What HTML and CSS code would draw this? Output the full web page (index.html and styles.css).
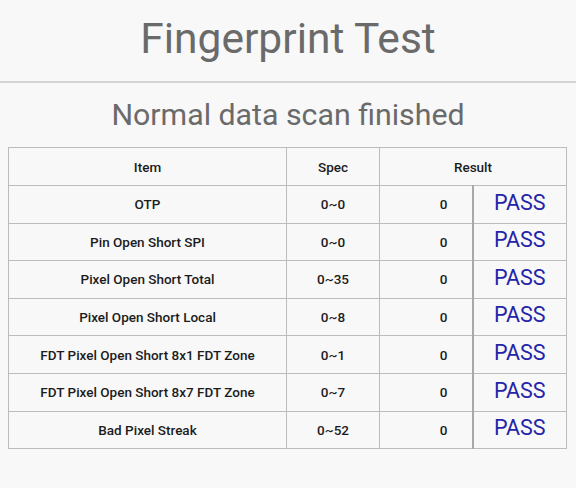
FILE: index.html
```html
<!DOCTYPE html>
<html>
<head>
<meta charset="utf-8">
<link rel="stylesheet" href="styles.css">
</head>
<body>
<header class="title-bar"><h1 class="title">Fingerprint Test</h1></header>
<h2 class="status">Normal data scan finished</h2>
<table class="results">
  <colgroup>
    <col class="c-item"><col class="c-spec"><col class="c-val"><col class="c-res">
  </colgroup>
  <thead>
    <tr><th>Item</th><th>Spec</th><th colspan="2">Result</th></tr>
  </thead>
  <tbody>
    <tr><td>OTP</td><td>0~0</td><td class="val">0</td><td class="pass">PASS</td></tr>
    <tr><td>Pin Open Short SPI</td><td>0~0</td><td class="val">0</td><td class="pass">PASS</td></tr>
    <tr><td>Pixel Open Short Total</td><td>0~35</td><td class="val">0</td><td class="pass">PASS</td></tr>
    <tr><td>Pixel Open Short Local</td><td>0~8</td><td class="val">0</td><td class="pass">PASS</td></tr>
    <tr><td>FDT Pixel Open Short 8x1 FDT Zone</td><td>0~1</td><td class="val">0</td><td class="pass">PASS</td></tr>
    <tr><td>FDT Pixel Open Short 8x7 FDT Zone</td><td>0~7</td><td class="val">0</td><td class="pass">PASS</td></tr>
    <tr><td>Bad Pixel Streak</td><td>0~52</td><td class="val">0</td><td class="pass">PASS</td></tr>
  </tbody>
</table>
</body>
</html>
```
FILE: styles.css
```css
html, body {
  margin: 0;
  padding: 0;
  background: #f8f8f8;
  font-family: Roboto, "Liberation Sans", sans-serif;
}
body {
  width: 576px;
  height: 488px;
  overflow: hidden;
}
.title-bar {
  height: 81px;
  border-bottom: 2px solid #d4d4d4;
  display: flex;
  align-items: center;
  justify-content: center;
}
.title {
  margin: 0;
  font-size: 42.5px;
  font-weight: 400;
  color: #6a6a6a;
  line-height: 1;
  padding-bottom: 2px;
}
.status {
  margin: 0;
  height: 64px;
  display: flex;
  align-items: center;
  justify-content: center;
  font-size: 30.3px;
  font-weight: 400;
  color: #6a6a6a;
  padding-bottom: 2px;
  box-sizing: border-box;
}
.results {
  margin-left: 8px;
  width: 558px;
  border-collapse: collapse;
  table-layout: fixed;
  border: 1.5px solid #bcbcbc;
}
.c-item { width: 278px; }
.c-spec { width: 93px; }
.c-val { width: 93px; }
.c-res { width: 94px; }
.results th, .results td {
  border: 1px solid #bcbcbc;
  height: 37px;
  padding: 0;
  text-align: center;
  font-size: 13.5px;
  font-weight: 500;
  color: #1c1c1c;
}
.results tbody td {
  height: 36.6px;
}
.results td.val {
  text-align: right;
  padding-right: 24px;
  border-right: 2px solid #a8a8a8;
}
.results td.pass {
  font-size: 21.5px;
  font-weight: 400;
  color: #2424a8;
  line-height: 1;
  height: 32.6px;
  padding-bottom: 4px;
}
```
